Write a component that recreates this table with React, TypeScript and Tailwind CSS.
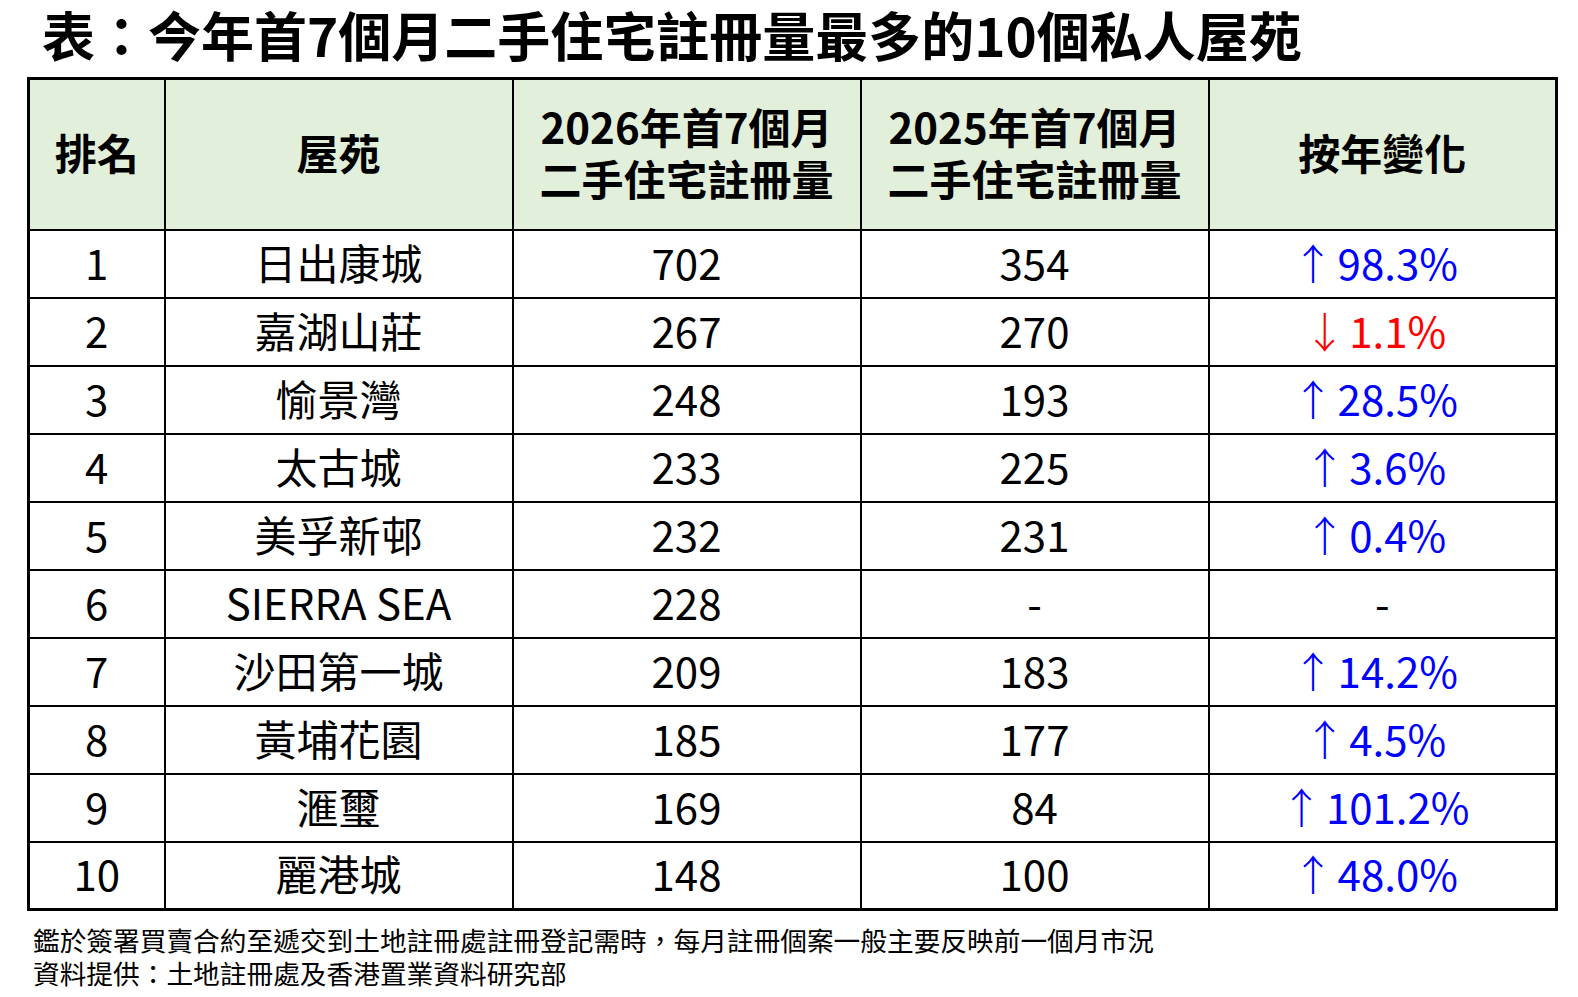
import React from "react";

type Row = {
  rank: number;
  name: string;
  y2026: string;
  y2025: string;
  change: string;
  dir: "up" | "down" | "none";
};

const rows: Row[] = [
  { rank: 1, name: "日出康城", y2026: "702", y2025: "354", change: "98.3%", dir: "up" },
  { rank: 2, name: "嘉湖山莊", y2026: "267", y2025: "270", change: "1.1%", dir: "down" },
  { rank: 3, name: "愉景灣", y2026: "248", y2025: "193", change: "28.5%", dir: "up" },
  { rank: 4, name: "太古城", y2026: "233", y2025: "225", change: "3.6%", dir: "up" },
  { rank: 5, name: "美孚新邨", y2026: "232", y2025: "231", change: "0.4%", dir: "up" },
  { rank: 6, name: "SIERRA SEA", y2026: "228", y2025: "-", change: "-", dir: "none" },
  { rank: 7, name: "沙田第一城", y2026: "209", y2025: "183", change: "14.2%", dir: "up" },
  { rank: 8, name: "黃埔花園", y2026: "185", y2025: "177", change: "4.5%", dir: "up" },
  { rank: 9, name: "滙璽", y2026: "169", y2025: "84", change: "101.2%", dir: "up" },
  { rank: 10, name: "麗港城", y2026: "148", y2025: "100", change: "48.0%", dir: "up" },
];

function Change({ row }: { row: Row }) {
  if (row.dir === "none") return <span>-</span>;
  const up = row.dir === "up";
  return (
    <span className={up ? "text-[#0000ff]" : "text-[#ff0000]"}>
      {/* arrow glyph centred in a narrow box so its stem sits close to the figure */}
      <span className="mr-[18px] inline-flex w-[13px] justify-center">
        <span className="shrink-0 font-light">{up ? "↑" : "↓"}</span>
      </span>
      {row.change}
    </span>
  );
}

export default function App() {
  return (
    <div className="h-[997px] w-[1578px] overflow-hidden bg-white font-['Noto_Sans_CJK_TC',sans-serif] text-black">
      <h1 className="h-[77px] pl-[42px] pt-[2px] text-[53px] font-bold leading-[64px]">
        表：今年首7個月二手住宅註冊量最多的10個私人屋苑
      </h1>

      <table className="ml-[27px] w-[1528px] table-fixed border-collapse border-[3px] border-black text-center">
        <colgroup>
          <col className="w-[136px]" />
          <col className="w-[348px]" />
          <col className="w-[348px]" />
          <col className="w-[348px]" />
          <col className="w-[348px]" />
        </colgroup>
        <thead>
          <tr className="h-[151px] bg-[#e2efda] text-[42px] font-bold leading-[52px]">
            <th className="border-2 border-black pb-[4px]">排名</th>
            <th className="border-2 border-black pb-[4px]">屋苑</th>
            <th className="border-2 border-black pb-[4px]">
              2026年首7個月
              <br />
              二手住宅註冊量
            </th>
            <th className="border-2 border-black pb-[4px]">
              2025年首7個月
              <br />
              二手住宅註冊量
            </th>
            <th className="border-2 border-black pb-[4px]">按年變化</th>
          </tr>
        </thead>
        <tbody className="text-[42px] leading-[50px]">
          {rows.map((r) => (
            <tr key={r.rank} className="h-[68px]">
              <td className="border-2 border-black pb-[4px]">{r.rank}</td>
              <td className="border-2 border-black pb-[4px]">{r.name}</td>
              <td className="border-2 border-black pb-[4px]">{r.y2026}</td>
              <td className="border-2 border-black pb-[4px]">{r.y2025}</td>
              <td className="border-2 border-black pb-[4px]">
                <Change row={r} />
              </td>
            </tr>
          ))}
        </tbody>
      </table>

      <div className="mt-[12px] pl-[33px] text-[26.7px] leading-[33px]">
        <p>鑑於簽署買賣合約至遞交到土地註冊處註冊登記需時，每月註冊個案一般主要反映前一個月市況</p>
        <p>資料提供：土地註冊處及香港置業資料研究部</p>
      </div>
    </div>
  );
}
